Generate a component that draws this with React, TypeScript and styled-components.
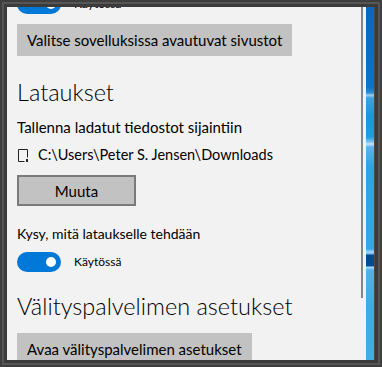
import React from "react";
import styled, { createGlobalStyle } from "styled-components";

const Global = createGlobalStyle`
  html, body { margin: 0; padding: 0; background: #444; }
  body { width: 382px; height: 367px; overflow: hidden; }
`;

const FONT = `"Lato", "Noto Sans", sans-serif`;

const Frame = styled.div`
  box-sizing: border-box;
  width: 382px;
  height: 367px;
  background: #4b4b4b;
  padding: 7px 8px 7px 7px;
  box-shadow: inset 0 0 0 2px #3e3e3e, inset 0 0 0 4px #565656, inset 0 0 0 7px #3b3b3b;
  display: flex;
`;

const Window = styled.div`
  flex: 1;
  display: flex;
  min-width: 0;
`;

const Panel = styled.div`
  position: relative;
  flex: 1;
  background: #f2f2f2;
  overflow: hidden;
  font-family: ${FONT};
  color: #000;
`;

const ScrollThumb = styled.div`
  position: absolute;
  top: 0;
  right: 3px;
  width: 2px;
  height: 291px;
  background: #858585;
`;

const Wallpaper = styled.div`
  width: 8px;
  background: linear-gradient(
    to bottom,
    #0768bd 0px,
    #0a74c8 80px,
    #2a8fd6 86px,
    #9fd0f0 88px,
    #3aa2e2 91px,
    #1696dc 110px,
    #1d9ee2 130px,
    #7cc4ee 135px,
    #c8e6f8 137px,
    #5ab5ea 140px,
    #2aa4e4 160px,
    #33a8e6 242px,
    #a8d8f4 245px,
    #6cbce8 247px,
    #00488c 248px,
    #004f96 259px,
    #b7e0f7 260px,
    #51b1e8 263px,
    #3aabe6 300px,
    #40aee6 353px
  );
`;

const Content = styled.div`
  display: flex;
  flex-direction: column;
  align-items: flex-start;
  padding: 0 10px;
  margin-top: -13px;
`;

const ToggleRow = styled.div<{ $mt?: number }>`
  display: flex;
  align-items: center;
  gap: 13px;
  margin-top: ${(p) => p.$mt ?? 0}px;
  height: 20px;
`;

const Toggle = styled.div`
  position: relative;
  box-sizing: border-box;
  width: 44px;
  height: 20px;
  border-radius: 10px;
  background: #0078d7;
  flex: none;
`;

const Knob = styled.div`
  position: absolute;
  top: 5px;
  right: 5px;
  width: 10px;
  height: 10px;
  border-radius: 50%;
  background: #fff;
`;

const ToggleText = styled.span`
  font-size: 12px;
  line-height: 20px;
`;

const Button = styled.button<{ $mt: number; $w?: number; $bordered?: boolean }>`
  box-sizing: border-box;
  margin-top: ${(p) => p.$mt}px;
  height: ${(p) => (p.$bordered ? 31 : 32)}px;
  ${(p) => (p.$w ? `width: ${p.$w}px;` : "padding: 0 10px;")}
  background: #c2c2c2;
  border: ${(p) => (p.$bordered ? "2px solid #7a7a7a" : "none")};
  font-family: ${FONT};
  font-size: 15px;
  color: #000;
  display: flex;
  align-items: center;
  justify-content: center;
  white-space: nowrap;
  flex: none;
`;

const Heading = styled.h2<{ $mt: number }>`
  margin: ${(p) => p.$mt}px 0 0;
  font-size: 23.5px;
  font-weight: 300;
  line-height: 32px;
  white-space: nowrap;
`;

const Label = styled.div<{ $mt: number; $size?: number }>`
  margin-top: ${(p) => p.$mt}px;
  font-size: ${(p) => p.$size ?? 15}px;
  line-height: 20px;
  white-space: nowrap;
`;

const PathRow = styled.div`
  margin-top: 8px;
  display: flex;
  align-items: center;
  gap: 9px;
  font-size: 14.5px;
  line-height: 20px;
  white-space: nowrap;
  padding-left: 1px;
`;

const FolderIcon = () => (
  <svg width="11" height="13" viewBox="0 0 11 13" style={{ flex: "none" }}>
    <path d="M0.5 0.5 H9.5 V8.5 M0.5 0.5 V12.5 H6.5" fill="none" stroke="#222" strokeWidth="1" />
    <rect x="8" y="10" width="2" height="3" fill="#222" />
  </svg>
);

export default function App() {
  return (
    <>
      <Global />
      <Frame>
        <Window>
          <Panel>
            <Content>
              <ToggleRow>
                <Toggle>
                  <Knob />
                </Toggle>
                <ToggleText>Käytössä</ToggleText>
              </ToggleRow>
              <Button $mt={10}>Valitse sovelluksissa avautuvat sivustot</Button>
              <Heading $mt={20}>Lataukset</Heading>
              <Label $mt={9}>Tallenna ladatut tiedostot sijaintiin</Label>
              <PathRow>
                <FolderIcon />
                <span>C:\Users\Peter S. Jensen\Downloads</span>
              </PathRow>
              <Button $mt={10} $w={119} $bordered>
                Muuta
              </Button>
              <Label $mt={18} $size={14}>
                Kysy, mitä lataukselle tehdään
              </Label>
              <ToggleRow $mt={8}>
                <Toggle>
                  <Knob />
                </Toggle>
                <ToggleText>Käytössä</ToggleText>
              </ToggleRow>
              <Heading $mt={18}>Välityspalvelimen asetukset</Heading>
              <Button $mt={11}>Avaa välityspalvelimen asetukset</Button>
            </Content>
            <ScrollThumb />
          </Panel>
          <Wallpaper />
        </Window>
      </Frame>
    </>
  );
}
